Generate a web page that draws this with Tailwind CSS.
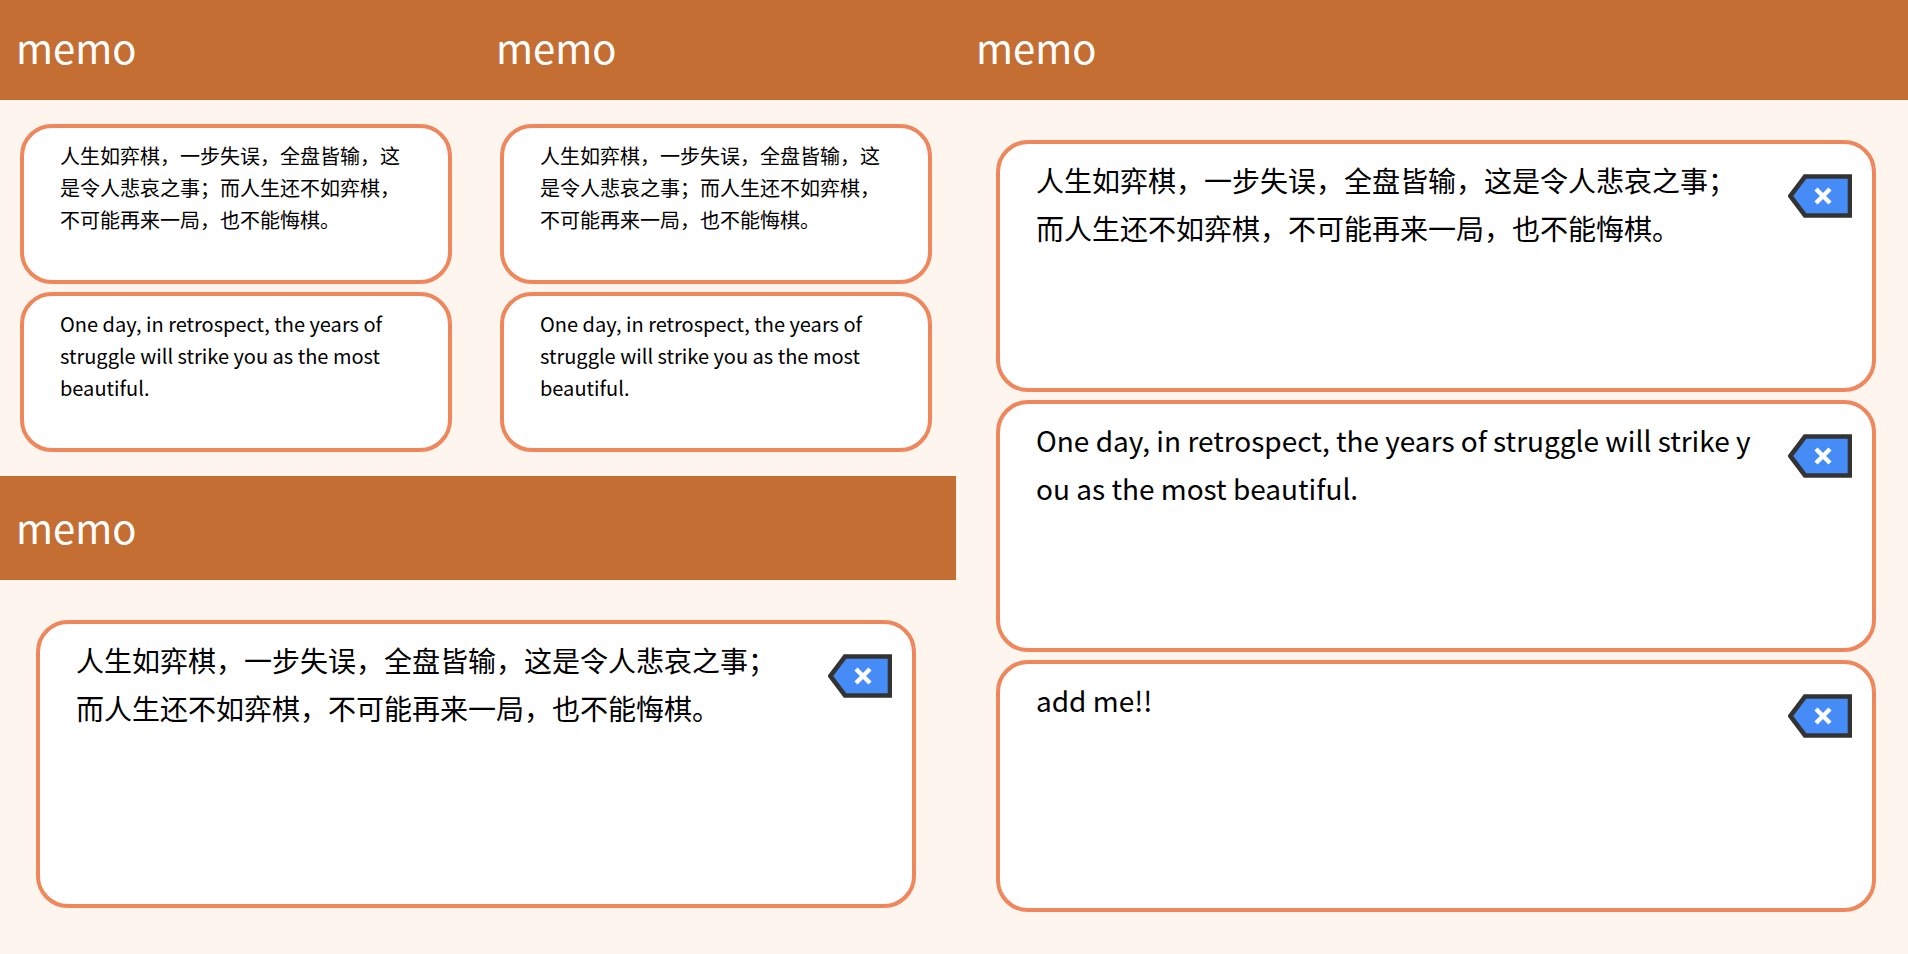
<!DOCTYPE html>
<html lang="zh-CN">
<head>
<meta charset="utf-8">
<meta name="viewport" content="width=device-width, initial-scale=1">
<title>memo</title>
<script src="https://cdn.jsdelivr.net/npm/@tailwindcss/browser@4"></script>
</head>
<body class="min-h-screen bg-[#fef5ef] font-['Noto_Sans_CJK_SC',sans-serif] text-black">
<svg class="hidden" aria-hidden="true">
  <symbol id="delete" viewBox="0 0 64 64">
    <path d="M17 12.5H62V51.5H17L2.3 32Z" fill="#468cf7" stroke="#333333" stroke-width="4.6"/>
    <path d="M28 25L42 39M42 25L28 39" fill="none" stroke="#ffffff" stroke-width="4.4"/>
  </symbol>
</svg>
<main class="grid grid-cols-[960fr_948fr] items-start">
  <div>
    <div class="grid grid-cols-2">
      <section>
        <header class="flex h-25 items-center bg-[#c46e33] px-4 pb-1.5">
          <h1 class="text-[40px] leading-[60px] text-white">memo</h1>
        </header>
        <div class="flex flex-col gap-2 pt-6 pr-7 pb-6 pl-5">
          <article class="min-h-40 rounded-[32px] border-4 border-[#f0865c] bg-white px-9 py-3">
            <p class="text-xl leading-8">人生如弈棋，一步失误，全盘皆输，这是令人悲哀之事；而人生还不如弈棋，不可能再来一局，也不能悔棋。</p>
          </article>
          <article class="min-h-40 rounded-[32px] border-4 border-[#f0865c] bg-white px-9 py-3">
            <p class="text-xl leading-8">One day, in retrospect, the years of struggle will strike you as the most beautiful.</p>
          </article>
        </div>
      </section>
      <section>
        <header class="flex h-25 items-center bg-[#c46e33] px-4 pb-1.5">
          <h1 class="text-[40px] leading-[60px] text-white">memo</h1>
        </header>
        <div class="flex flex-col gap-2 pt-6 pr-7 pb-6 pl-5">
          <article class="min-h-40 rounded-[32px] border-4 border-[#f0865c] bg-white px-9 py-3">
            <p class="text-xl leading-8">人生如弈棋，一步失误，全盘皆输，这是令人悲哀之事；而人生还不如弈棋，不可能再来一局，也不能悔棋。</p>
          </article>
          <article class="min-h-40 rounded-[32px] border-4 border-[#f0865c] bg-white px-9 py-3">
            <p class="text-xl leading-8">One day, in retrospect, the years of struggle will strike you as the most beautiful.</p>
          </article>
        </div>
      </section>
    </div>
    <section>
      <header class="mr-1 flex h-26 items-center bg-[#c46e33] px-4 pt-1 pb-1.5">
        <h1 class="text-[40px] leading-[60px] text-white">memo</h1>
      </header>
      <div class="pt-10 pr-11 pl-9">
        <article class="flex min-h-72 items-start gap-3 rounded-[32px] border-4 border-[#f0865c] bg-white pl-9">
          <p class="flex-1 py-3 text-[28px] leading-[48px] break-all">人生如弈棋，一步失误，全盘皆输，这是令人悲哀之事；而人生还不如弈棋，不可能再来一局，也不能悔棋。</p>
          <button type="button" aria-label="删除" class="m-5 shrink-0 cursor-pointer"><svg class="size-16"><use href="#delete"/></svg></button>
        </article>
      </div>
    </section>
  </div>
  <section>
    <header class="flex h-25 items-center bg-[#c46e33] px-4 pb-1.5">
      <h1 class="text-[40px] leading-[60px] text-white">memo</h1>
    </header>
    <div class="flex flex-col gap-2 pt-10 pr-8 pl-9">
      <article class="flex min-h-63 items-start gap-3 rounded-[32px] border-4 border-[#f0865c] bg-white pl-9">
        <p class="flex-1 py-3 text-[28px] leading-[48px] break-all">人生如弈棋，一步失误，全盘皆输，这是令人悲哀之事；而人生还不如弈棋，不可能再来一局，也不能悔棋。</p>
        <button type="button" aria-label="删除" class="m-5 shrink-0 cursor-pointer"><svg class="size-16"><use href="#delete"/></svg></button>
      </article>
      <article class="flex min-h-63 items-start gap-3 rounded-[32px] border-4 border-[#f0865c] bg-white pl-9">
        <p class="flex-1 py-3 text-[28px] leading-[48px] break-all">One day, in retrospect, the years of struggle will strike you as the most beautiful.</p>
        <button type="button" aria-label="删除" class="m-5 shrink-0 cursor-pointer"><svg class="size-16"><use href="#delete"/></svg></button>
      </article>
      <article class="flex min-h-63 items-start gap-3 rounded-[32px] border-4 border-[#f0865c] bg-white pl-9">
        <p class="flex-1 py-3 text-[28px] leading-[48px] break-all">add me!!</p>
        <button type="button" aria-label="删除" class="m-5 shrink-0 cursor-pointer"><svg class="size-16"><use href="#delete"/></svg></button>
      </article>
    </div>
  </section>
</main>
</body>
</html>
